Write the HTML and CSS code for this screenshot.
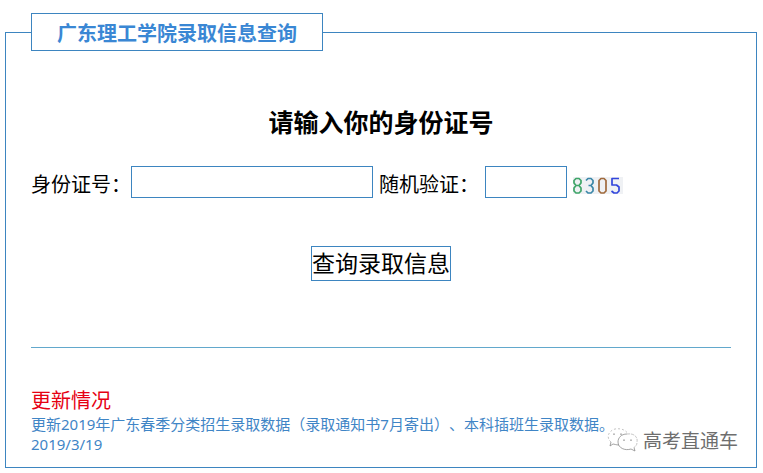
FILE: index.html
```html
<!DOCTYPE html>
<html lang="zh-CN">
<head>
<meta charset="utf-8">
<title>广东理工学院录取信息查询</title>
<link rel="stylesheet" href="styles.css">
</head>
<body>
<form class="query">
  <fieldset class="panel">
    <legend class="panel-title">广东理工学院录取信息查询</legend>
    <h1 class="heading">请输入你的身份证号</h1>
    <div class="fields">
      <label class="field-label" for="idno">身份证号：</label>
      <input class="box id-box" id="idno" type="text">
      <label class="field-label code-label" for="code">随机验证：</label>
      <input class="box code-box" id="code" type="text">
      <svg class="captcha" viewBox="0 0 50 17" role="img" aria-label="8305">
        <rect width="50" height="17" fill="#eff1f4"/>
        <g fill="none" stroke-width="1.7" stroke-linejoin="round">
          <path stroke="#3fa568" d="M3 1.5H6L8 3.5V6L6 8.5H3L1 6V3.5ZM3 8.5H6L8 11V14L6 16H3L1 14V11Z"/>
          <path stroke="#3b87a8" d="M13 3.5L15 1.5H18L20 3.5V6L18 8.5H15.5M18 8.5L20 11V14L18 16H15L13 14"/>
          <path stroke="#a06a3c" d="M28 1.5H31L33 3.5V14L31 16H28L26 14V3.5Z"/>
          <path stroke="#3246dc" d="M46 1.5H39V8H43.5L46 10V14L44 16H41L38.5 14"/>
        </g>
      </svg>
    </div>
    <button class="submit" type="submit">查询录取信息</button>
    <hr class="rule">
    <section class="news">
      <h2 class="news-title">更新情况</h2>
      <p>更新2019年广东春季分类招生录取数据（录取通知书7月寄出）、本科插班生录取数据。</p>
      <p>2019/3/19</p>
    </section>
  </fieldset>
  <div class="watermark">
    <svg class="wechat" viewBox="0 0 32 26" aria-hidden="true">
      <g fill="none" stroke="#8c8c8c" stroke-width="0.8">
        <path stroke="#b5b5b5" stroke-dasharray="2 2" d="M4 14C-1 10 1 3 8 1C14 0 19 2 21 6"/>
        <path d="M4 14L3 18L6 16C7 16 9 17 12 17"/>
        <path stroke="#b5b5b5" stroke-dasharray="3 1" d="M20 6C27 5 31 9 30 14C30 17 29 18 27 19.5"/>
        <path d="M20 6C14 6 11 10 11 14C11 20 18 23 24 21L28 23L27 19.5"/>
      </g>
      <g fill="none" stroke="#8c8c8c" stroke-width="0.9">
        <path d="M6 6.500Q7 5 8 6.500M13 6.500Q14 5 15 6.500M16 12.500Q17 11 18 12.500M23 12.500Q24 11 25 12.500"/>
      </g>
    </svg>
    <span>高考直通车</span>
  </div>
</form>
</body>
</html>
```
FILE: styles.css
```css
* {
  box-sizing: border-box;
}

body {
  margin: 0;
  padding: 13px 6px 5px 5px;
  background: #fff;
  color: #000;
  font-family: "Noto Sans", "Noto Sans CJK SC", sans-serif;
  text-spacing-trim: space-all;
}

.query {
  position: relative;
}

.panel {
  min-width: 0;
  margin: 0;
  padding: 56px 25px 13px;
  border: 1px solid #3d85c0;
}

.panel-title {
  padding: 3px 25px 0;
  border: 1px solid #3d85c0;
  color: #3a87d4;
  font-size: 20px;
  font-weight: 700;
  line-height: 33px;
}

.heading {
  margin: 0 0 29px;
  font-size: 25px;
  line-height: 30px;
  text-align: center;
}

.fields {
  display: flex;
  align-items: center;
  font-size: 20px;
  line-height: 32px;
}

.field-label {
  padding-top: 5px;
  line-height: 27px;
}

.box {
  height: 32px;
  padding: 0 4px;
  border: 1px solid #3d85c0;
  background: #fff;
  font: inherit;
}

.id-box {
  width: 242px;
}

.code-label {
  margin: 0 6px;
}

.code-box {
  width: 82px;
}

.captcha {
  width: 50px;
  height: 17px;
  margin: 6px 0 0 6px;
}

.submit {
  display: block;
  margin: 48px auto 66px;
  padding: 0;
  border: 1px solid #3d85c0;
  background: #fff;
  color: #000;
  font-family: inherit;
  font-size: 23px;
  line-height: 33px;
}

.rule {
  margin: 0 0 40px;
  border: 0;
  border-top: 1px solid #62a8cc;
}

.news {
  color: #3f85c6;
  font-size: 15px;
  line-height: 20px;
}

.news p {
  margin: 0;
}

.news-title {
  margin: 0;
  color: #e60012;
  font-size: 20px;
  font-weight: 400;
  line-height: 26px;
}

.watermark {
  position: absolute;
  right: 19px;
  bottom: 14px;
  display: flex;
  align-items: center;
  gap: 4px;
  color: #6e6e6e;
  font-size: 19px;
  line-height: 26px;
}

.wechat {
  width: 32px;
  height: 26px;
}
```
